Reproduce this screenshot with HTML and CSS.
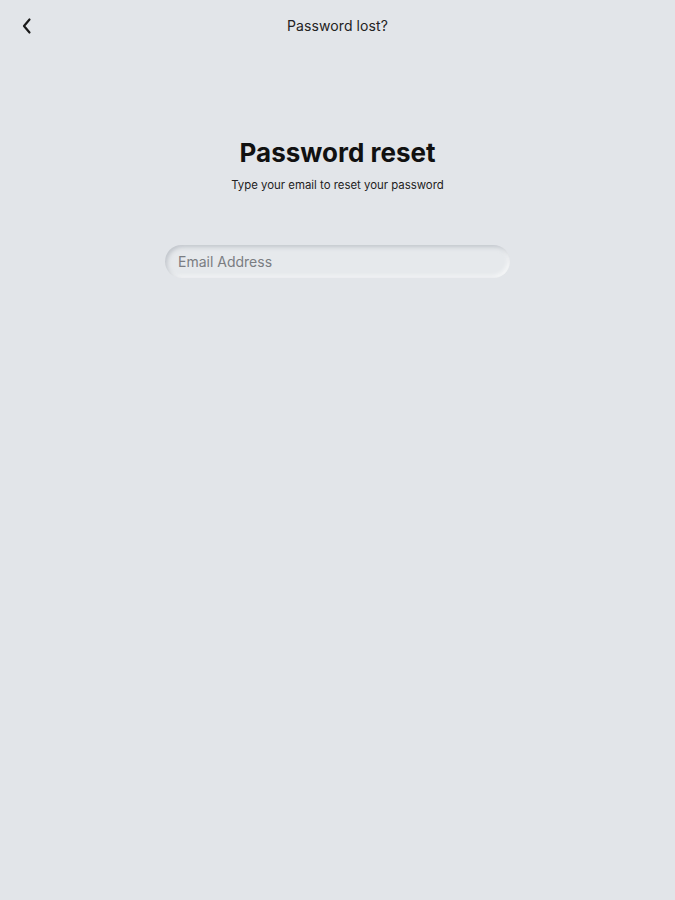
FILE: index.html
```html
<!DOCTYPE html>
<html lang="en">
<head>
<meta charset="utf-8">
<title>Password lost?</title>
<link rel="stylesheet" href="styles.css">
</head>
<body>
<header class="topbar">
  <button class="back" aria-label="Back">
    <svg width="12" height="18" viewBox="0 0 12 18"><path d="M8.5 2.5 L3 9 L8.5 15.5" fill="none" stroke="#1a1a1a" stroke-width="2.2" stroke-linecap="round" stroke-linejoin="round"/></svg>
  </button>
  <div class="topbar-title">Password lost?</div>
</header>
<main class="content">
  <h1 class="title">Password reset</h1>
  <p class="subtitle">Type your email to reset your password</p>
  <div class="field">
    <input class="input" type="email" placeholder="Email Address">
  </div>
</main>
</body>
</html>
```
FILE: styles.css
```css
* { box-sizing: border-box; }
html, body { margin: 0; height: 100%; }
body {
  background: #e2e5e9;
  font-family: Inter, "Noto Sans", sans-serif;
  color: #111;
}
.topbar {
  position: relative;
  height: 50px;
  display: flex;
  align-items: center;
  justify-content: center;
}
.back {
  position: absolute;
  left: 20px;
  top: 17px;
  border: 0;
  background: none;
  padding: 0;
  width: 14px;
  height: 18px;
  display: flex;
  align-items: center;
  justify-content: center;
}
.topbar-title {
  font-size: 14px;
  color: #222;
  letter-spacing: 0.1px;
}
.content {
  display: flex;
  flex-direction: column;
  align-items: center;
  padding-top: 87px;
}
.title {
  margin: 0;
  font-size: 26px;
  font-weight: 700;
  line-height: 32px;
  color: #111;
}
.subtitle {
  margin: 9px 0 0;
  font-size: 11.4px;
  line-height: 14px;
  color: #222;
}
.field {
  margin-top: 53px;
  width: 345px;
}
.input {
  width: 100%;
  height: 33px;
  border-radius: 17px;
  border: 0;
  background: #e6e9ec;
  box-shadow: inset 2px 2px 4px rgba(160,165,175,0.55), inset -2px -2px 4px rgba(255,255,255,0.7);
  padding: 0 13px;
  font-family: Inter, "Noto Sans", sans-serif;
  font-size: 14px;
  color: #222;
  outline: none;
}
.input::placeholder { color: #7a7d82; }
```
